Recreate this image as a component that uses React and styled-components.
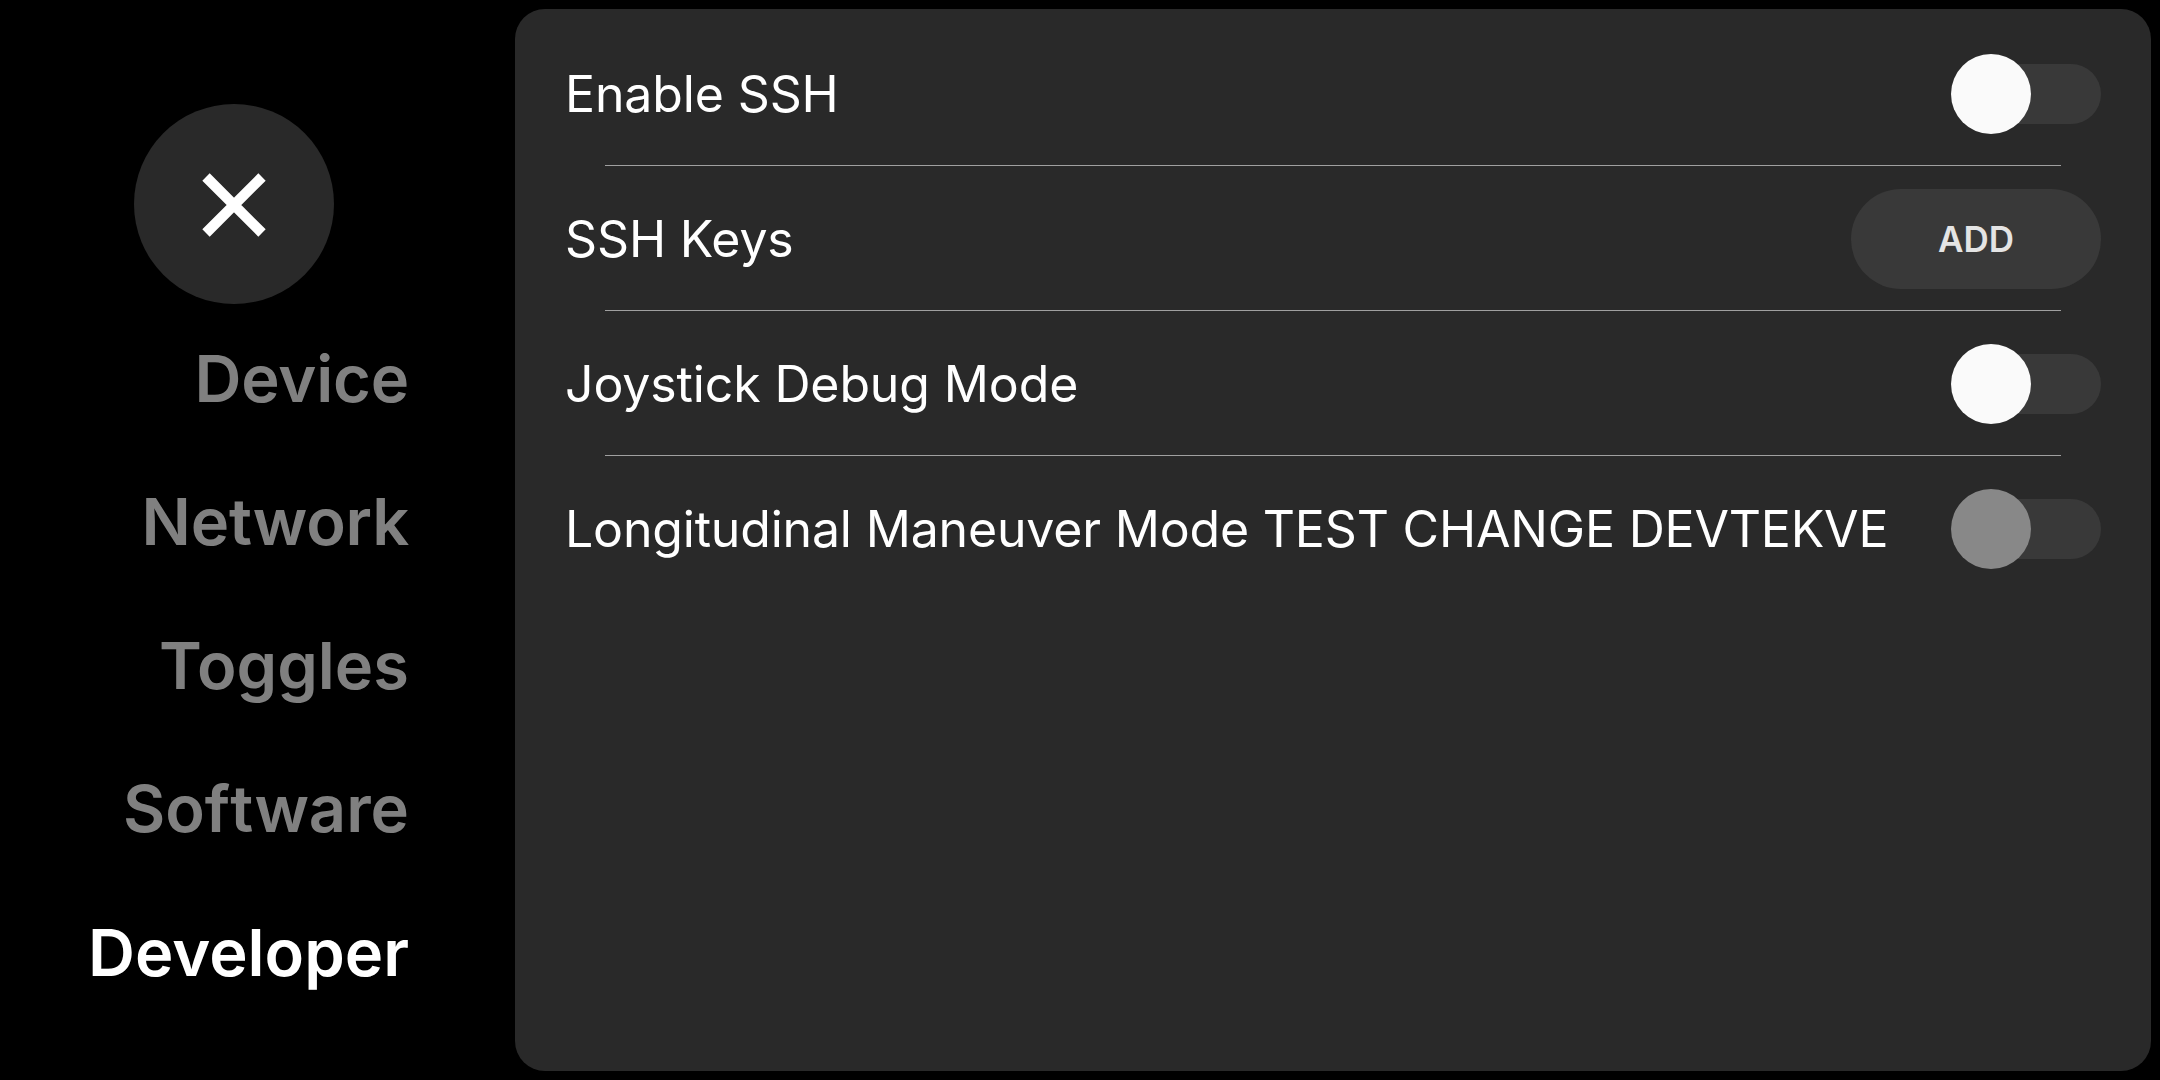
import React from "react";
import styled, { createGlobalStyle } from "styled-components";

const Global = createGlobalStyle`
  * { box-sizing: border-box; }
  body { margin: 0; background: #000; }
`;
const Screen = styled.div`
  display: flex;
  width: 2160px;
  height: 1080px;
  background: #000;
  color: #fff;
  font-family: Inter, sans-serif;
  overflow: hidden;
`;
const Sidebar = styled.aside`
  width: 515px;
  padding: 104px 106px 0 50px;
  display: flex;
  flex-direction: column;
  flex-shrink: 0;
`;
const CloseButton = styled.button`
  width: 200px;
  height: 200px;
  margin-left: 84px;
  padding: 2px 0 0;
  border: 0;
  border-radius: 50%;
  background: #292929;
  display: flex;
  align-items: center;
  justify-content: center;
  flex-shrink: 0;
`;
const Nav = styled.nav`
  display: flex;
  flex-direction: column;
  align-items: flex-end;
  margin-top: 2.6px;
`;
const NavItem = styled.button`
  height: 143.5px;
  padding: 0;
  border: 0;
  background: none;
  font: 600 65px/79px Inter, sans-serif;
  letter-spacing: ${(p) => p.$tracking || 0}px;
  font-variant-ligatures: none;
  color: ${(p) => (p.$active ? "#fff" : "#808080")};
`;
const Loose = styled.span`
  letter-spacing: 0.3px;
`;
const Panel = styled.main`
  width: 1636px;
  height: 1062px;
  margin-top: 9px;
  padding: 12px 50px;
  border-radius: 30px;
  background: #292929;
`;
const Row = styled.section`
  display: flex;
  align-items: center;
  justify-content: space-between;
  height: 144px;
  padding-top: 2px;
`;
const Divider = styled.hr`
  height: 1px;
  margin: 0 40px;
  border: 0;
  background: #a0a0a0;
`;
const Label = styled.span`
  font-size: 50px;
  font-weight: 400;
  line-height: 60px;
  letter-spacing: ${(p) => p.$tracking || -0.13}px;
  white-space: nowrap;
`;
const Toggle = styled.button`
  width: 150px;
  height: 80px;
  padding: 0;
  border: 0;
  display: flex;
  align-items: center;
  background: none;
`;
const Knob = styled.span`
  width: 80px;
  height: 80px;
  border-radius: 50%;
  background: ${(p) => (p.$disabled ? "#888" : "#fafafa")};
  flex-shrink: 0;
  z-index: 1;
`;
const Track = styled.span`
  width: 110px;
  height: 60px;
  margin-left: -40px;
  border-radius: 0 30px 30px 0;
  background: #393939;
`;
const AddButton = styled.button`
  width: 250px;
  height: 100px;
  border: 0;
  border-radius: 50px;
  background: #393939;
  color: #e4e4e4;
  font: 600 35px/42px Inter, sans-serif;
`;

const tabs = [
  { name: "Device", tracking: -0.2 },
  { name: "Network", tracking: -0.2 },
  { name: "Toggles" },
  { name: "Software", content: <>So<Loose>f</Loose>tware</> },
  { name: "Developer", active: true },
];
const settings = [
  { label: "Enable SSH" },
  { label: "SSH Keys", action: "ADD" },
  { label: "Joystick Debug Mode" },
  { label: "Longitudinal Maneuver Mode TEST CHANGE DEVTEKVE", tracking: -0.18, disabled: true },
];

export default function App() {
  return (
    <Screen>
      <Global />
      <Sidebar>
        <CloseButton aria-label="Close">
          <svg width="66" height="66" viewBox="0 0 66 66" stroke="#fff" strokeWidth="10.4">
            <path d="M5 5L61 61M61 5L5 61" />
          </svg>
        </CloseButton>
        <Nav>
          {tabs.map((t) => (
            <NavItem key={t.name} $active={t.active} $tracking={t.tracking}>
              {t.content || t.name}
            </NavItem>
          ))}
        </Nav>
      </Sidebar>
      <Panel>
        {settings.map((s, i) => (
          <React.Fragment key={s.label}>
            {i > 0 && <Divider />}
            <Row>
              <Label $tracking={s.tracking}>{s.label}</Label>
              {s.action ? (
                <AddButton>{s.action}</AddButton>
              ) : (
                <Toggle aria-label={s.label} disabled={s.disabled}>
                  <Knob $disabled={s.disabled} />
                  <Track />
                </Toggle>
              )}
            </Row>
          </React.Fragment>
        ))}
      </Panel>
    </Screen>
  );
}
